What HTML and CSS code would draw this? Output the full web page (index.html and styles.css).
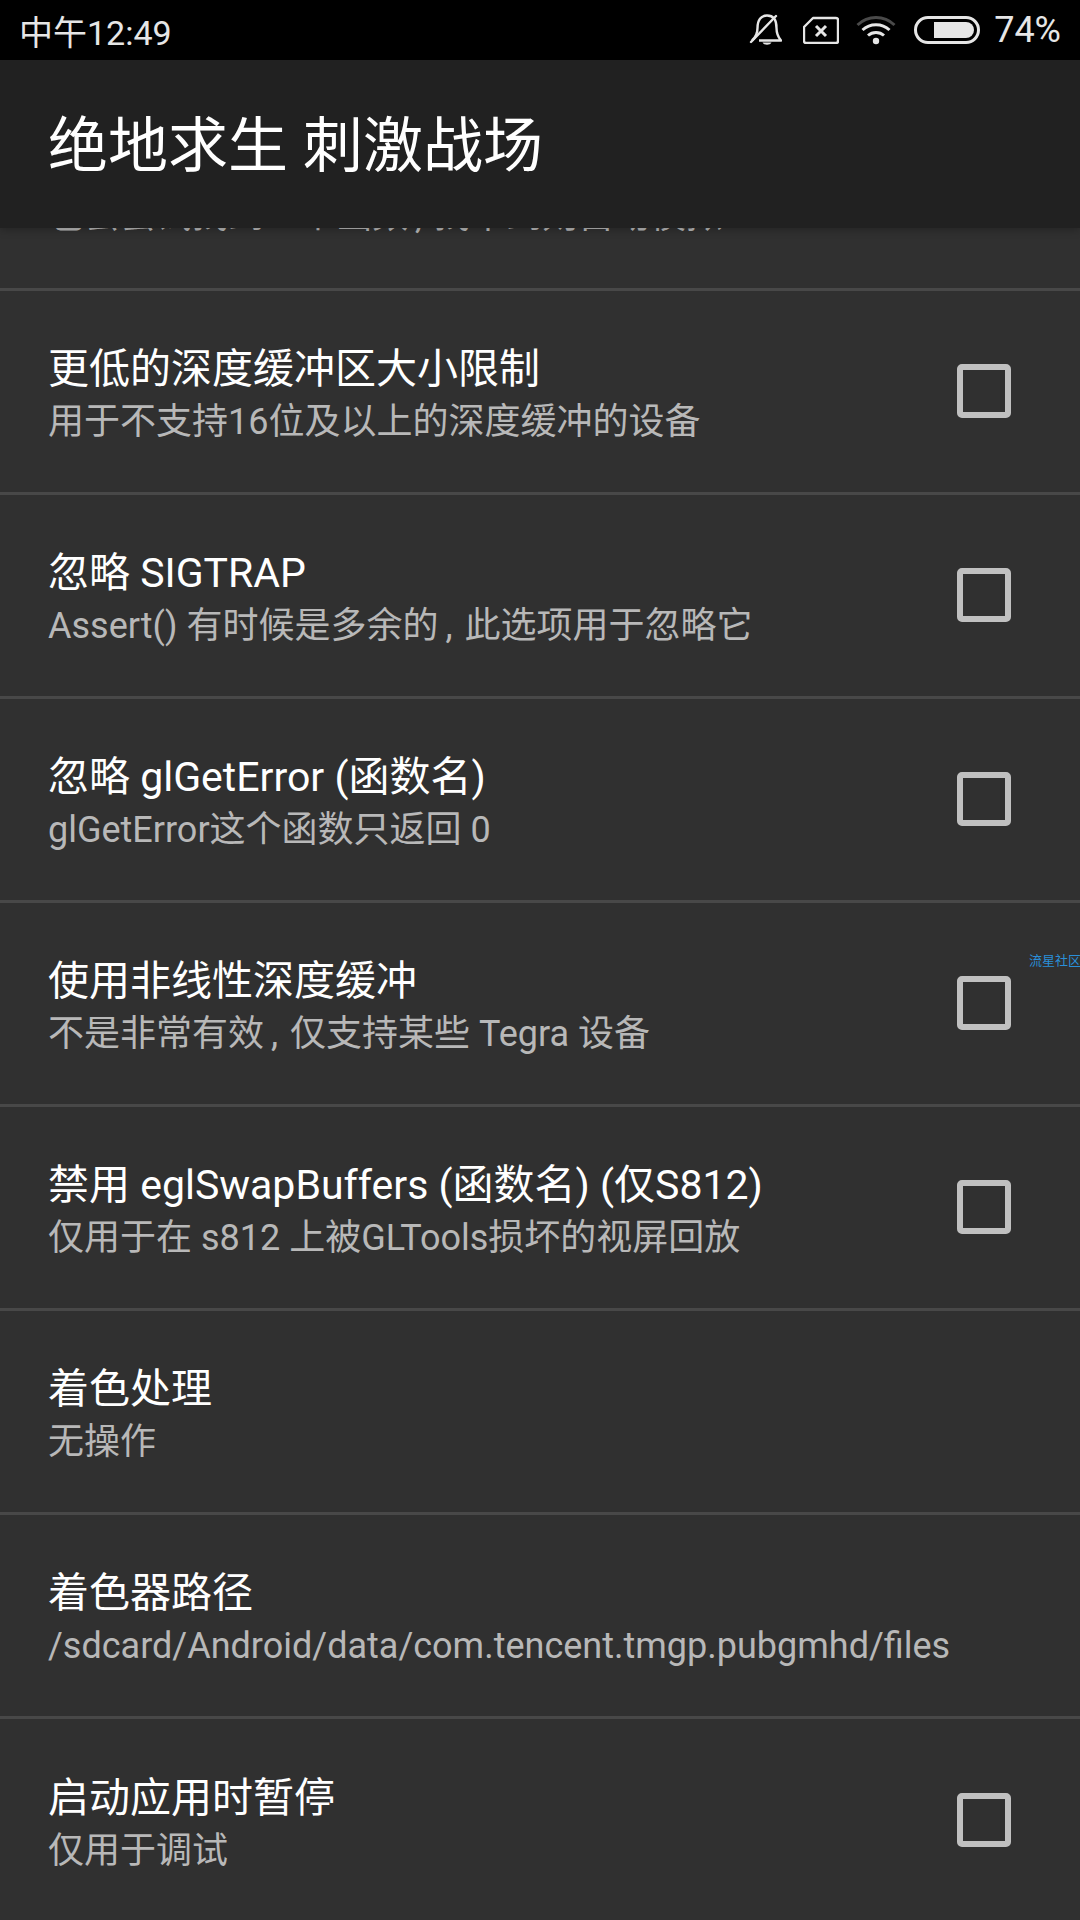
FILE: index.html
```html
<!DOCTYPE html>
<html lang="zh-CN">

<head>
    <meta charset="UTF-8">
    <title>绝地求生 刺激战场</title>
    <link rel="stylesheet" href="styles.css">
</head>

<body>
    <div class="status-bar">
        <span class="status-time">中午12:49</span>
        <div class="status-icons">
            <svg class="icon-bell" width="34" height="34" viewBox="0 0 34 34" fill="none" stroke="#e6e6e6" stroke-width="2.4">
                <path d="M4 27.500 C8 24 9.500 21 9.500 15 C9.500 7 13 2.500 19 2.500 C25 2.500 28.500 7 28.500 15 C28.500 21 30 24 33 27.500 H11" stroke-linejoin="round"/>
                <path d="M3 29 L28 3" stroke-linecap="round"/>
                <path d="M14.500 29.500 C16 32.500 22 32.500 23.500 29.500 Z" fill="#e6e6e6" stroke="none"/>
            </svg>
            <svg class="icon-sim" width="36" height="28" viewBox="0 0 36 28" fill="none" stroke="#e6e6e6" stroke-width="2.400">
                <path d="M10 2 H33 Q35 2 35 4 V25 Q35 27 33 27 H3 Q1 27 1 25 V11 Z" stroke-linejoin="round"/>
                <path d="M13 10 L23 20 M23 10 L13 20" stroke-width="3"/>
            </svg>
            <svg class="icon-wifi" width="40" height="30" viewBox="0 0 40 30" fill="none">
                <path d="M1.500 10 C12 0 28 0 38.500 10" stroke="#4a4a4a" stroke-width="3"/>
                <path d="M6.500 15 C14 8 26 8 33.500 15" stroke="#e6e6e6" stroke-width="3"/>
                <path d="M12 20.500 C16.500 16.500 23.500 16.500 28 20.500" stroke="#e6e6e6" stroke-width="3"/>
                <circle cx="20" cy="26" r="3.200" fill="#e6e6e6"/>
            </svg>
            <div class="battery"><div class="battery-level"></div></div>
            <span class="status-pct">74%</span>
        </div>
    </div>

    <header class="toolbar">绝地求生 刺激战场</header>

    <main class="settings-list">
        <div class="row row-cut">
            <div class="row-sub">也会尝试找到一个函数<span class="comma">,</span>找不到则自动模拟</div>
        </div>

        <div class="row">
            <div class="row-text">
                <div class="row-title">更低的深度缓冲区大小限制</div>
                <div class="row-sub">用于不支持16位及以上的深度缓冲的设备</div>
            </div>
            <div class="checkbox"></div>
        </div>

        <div class="row">
            <div class="row-text">
                <div class="row-title">忽略 SIGTRAP</div>
                <div class="row-sub">Assert() 有时候是多余的<span class="comma">,</span>此选项用于忽略它</div>
            </div>
            <div class="checkbox"></div>
        </div>

        <div class="row">
            <div class="row-text">
                <div class="row-title">忽略 glGetError (函数名)</div>
                <div class="row-sub">glGetError这个函数只返回 0</div>
            </div>
            <div class="checkbox"></div>
        </div>

        <div class="row">
            <div class="row-text">
                <div class="row-title">使用非线性深度缓冲</div>
                <div class="row-sub">不是非常有效<span class="comma">,</span>仅支持某些 Tegra 设备</div>
            </div>
            <div class="checkbox"></div>
        </div>

        <div class="row">
            <div class="row-text">
                <div class="row-title">禁用 eglSwapBuffers (函数名) (仅S812)</div>
                <div class="row-sub">仅用于在 s812 上被GLTools损坏的视屏回放</div>
            </div>
            <div class="checkbox"></div>
        </div>

        <div class="row">
            <div class="row-text">
                <div class="row-title">着色处理</div>
                <div class="row-sub">无操作</div>
            </div>
        </div>

        <div class="row">
            <div class="row-text">
                <div class="row-title">着色器路径</div>
                <div class="row-sub">/sdcard/Android/data/com.tencent.tmgp.pubgmhd/files</div>
            </div>
        </div>

        <div class="row row-last">
            <div class="row-text">
                <div class="row-title">启动应用时暂停</div>
                <div class="row-sub">仅用于调试</div>
            </div>
            <div class="checkbox"></div>
        </div>
    </main>

    <div class="watermark">流星社区</div>
</body>

</html>
```

FILE: styles.css
```css
html, body {
    margin: 0;
    padding: 0;
}

body {
    position: relative;
    width: 1080px;
    height: 1920px;
    overflow: hidden;
    background-color: #303030;
    font-family: Roboto, "Noto Sans CJK SC", sans-serif;
}

.status-bar {
    height: 60px;
    background-color: #000;
    color: #e6e6e6;
    display: flex;
    align-items: center;
    justify-content: space-between;
    padding: 0 19px;
    font-size: 34px;
}

.status-icons {
    display: flex;
    align-items: center;
}

.icon-bell {
    margin-right: 21px;
}

.icon-sim {
    margin-right: 17px;
}

.icon-wifi {
    margin-right: 18px;
}

.battery {
    width: 66px;
    height: 28px;
    box-sizing: border-box;
    border: 3px solid #e6e6e6;
    border-radius: 14px;
    padding: 3px 3px 3px 17px;
    margin-right: 14px;
}

.battery-level {
    height: 100%;
    background-color: #e6e6e6;
    border-radius: 0 8px 8px 0;
}

.status-pct {
    font-size: 36px;
}

.toolbar {
    position: relative;
    z-index: 2;
    height: 168px;
    line-height: 174px;
    padding-left: 48px;
    background-color: #212121;
    color: #fff;
    font-size: 60px;
    box-shadow: 0 2px 8px rgba(0, 0, 0, 0.25);
}

.settings-list {
    display: flex;
    flex-direction: column;
}

.row {
    height: 204px;
    box-sizing: border-box;
    border-bottom: 3px solid #484848;
    display: flex;
    align-items: center;
    justify-content: space-between;
    padding: 0 69px 0 48px;
}

.row-cut {
    height: 63px;
    align-items: flex-start;
    overflow: hidden;
}

.row-cut .row-sub {
    margin-top: -37px;
}

.row-last {
    border-bottom: none;
}

.row-text {
    padding-top: 5px;
}

.row-title {
    color: #fff;
    font-size: 41px;
    line-height: 55px;
}

.row-sub {
    color: #b8b8b8;
    font-size: 36px;
    line-height: 50px;
}

.comma {
    margin: 0 12px 0 7px;
}

.checkbox {
    width: 54px;
    height: 54px;
    box-sizing: border-box;
    border: 6px solid #c0c0c0;
    border-radius: 5px;
    flex-shrink: 0;
    margin-bottom: 2px;
}

.watermark {
    position: absolute;
    top: 952px;
    left: 1029px;
    color: #2a8fd8;
    font-size: 13px;
    line-height: 18px;
    white-space: nowrap;
}
```
